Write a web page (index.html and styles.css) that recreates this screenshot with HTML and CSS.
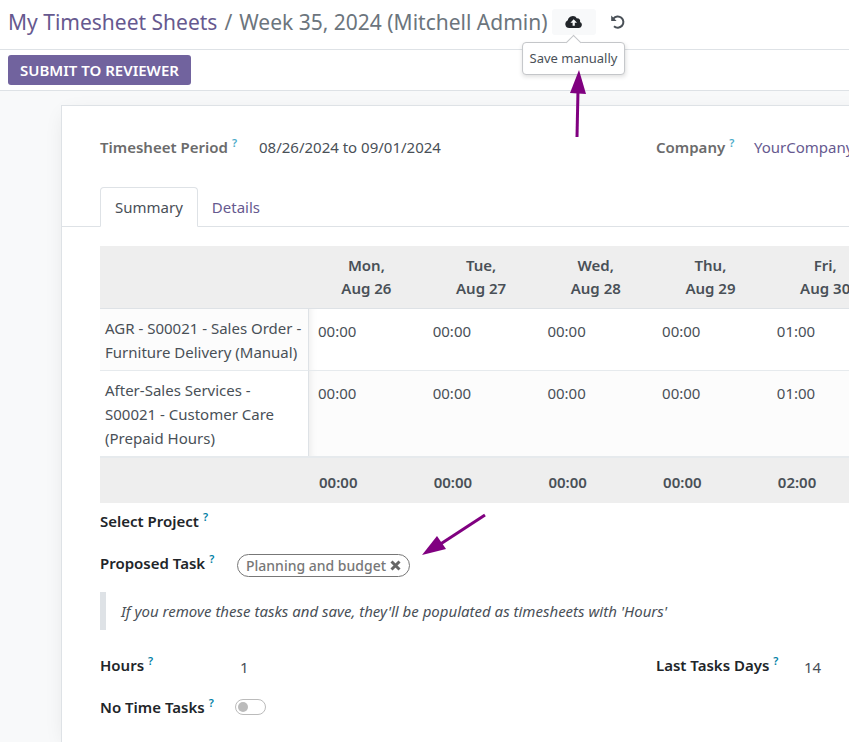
FILE: index.html
```html
<!DOCTYPE html>
<html lang="en">
<head>
<meta charset="utf-8">
<title>Week 35, 2024 (Mitchell Admin)</title>
<link rel="stylesheet" href="styles.css">
</head>
<body>
<header class="control-panel">
  <nav class="breadcrumb" aria-label="Breadcrumb">
    <a href="#">My Timesheet Sheets</a><span class="separator">/</span><span>Week 35, 2024 (Mitchell Admin)</span>
  </nav>
  <div class="save-wrap">
    <button class="icon-button active" type="button" aria-label="Save manually" aria-describedby="save-tip">
      <svg width="18" height="14" viewBox="0 0 18 14"><path fill="#212529" d="M4.2 13A4 4 0 0 1 2.8 5.3 5 5 0 0 1 12 3.4a2.7 2.7 0 0 1 3 3.5A3.2 3.2 0 0 1 14 13Z"/><path fill="#f8f9fa" d="M8.7 4.2 12 7.7H9.8v3.1H7.6V7.7H5.4Z"/></svg>
    </button>
    <div class="tooltip" id="save-tip" role="tooltip">Save manually</div>
    <svg class="arrow arrow-save" width="18" height="68" viewBox="0 0 18 68" aria-hidden="true"><path d="M8 67 9 20" stroke="#800080" stroke-width="3"/><path fill="#800080" d="M10 0 17 24 1 23Z"/></svg>
  </div>
  <button class="icon-button" type="button" aria-label="Discard changes">
    <svg width="16" height="16" viewBox="0 0 16 16" fill="none" stroke="#495057" stroke-width="2"><path d="M3.4 4.6A5.6 5.6 0 1 1 4 12.2"/><path fill="#495057" stroke="none" d="M1.2 1.6V7h5.4Z"/></svg>
  </button>
</header>
<div class="statusbar"><button class="primary" type="button">SUBMIT TO REVIEWER</button></div>
<main class="content">
  <div class="sheet">
    <section class="fields readonly">
      <div class="field"><span class="label">Timesheet Period<sup>?</sup></span><span>08/26/2024 to 09/01/2024</span></div>
      <div class="field company"><span class="label">Company<sup>?</sup></span><a href="#">YourCompany</a></div>
    </section>
    <nav class="tabs" aria-label="Sheet pages">
      <a class="tab selected" href="#">Summary</a>
      <a class="tab" href="#">Details</a>
    </nav>
    <div class="page">
      <table class="timesheet">
        <colgroup><col class="col-task"><col span="7"><col class="col-total"></colgroup>
        <thead>
          <tr><th></th><th>Mon,<br>Aug 26</th><th>Tue,<br>Aug 27</th><th>Wed,<br>Aug 28</th><th>Thu,<br>Aug 29</th><th>Fri,<br>Aug 30</th><th></th><th></th><th></th></tr>
        </thead>
        <tbody>
          <tr>
            <th scope="row">AGR - S00021 - Sales Order - Furniture Delivery (Manual)</th>
            <td><input aria-label="Sales Order, Aug 26" value="00:00"></td><td><input aria-label="Sales Order, Aug 27" value="00:00"></td><td><input aria-label="Sales Order, Aug 28" value="00:00"></td><td><input aria-label="Sales Order, Aug 29" value="00:00"></td><td><input aria-label="Sales Order, Aug 30" value="01:00"></td><td></td><td></td><td></td>
          </tr>
          <tr>
            <th scope="row">After-Sales Services - S00021 - Customer Care (Prepaid Hours)</th>
            <td><input aria-label="Customer Care, Aug 26" value="00:00"></td><td><input aria-label="Customer Care, Aug 27" value="00:00"></td><td><input aria-label="Customer Care, Aug 28" value="00:00"></td><td><input aria-label="Customer Care, Aug 29" value="00:00"></td><td><input aria-label="Customer Care, Aug 30" value="01:00"></td><td></td><td></td><td></td>
          </tr>
        </tbody>
        <tfoot>
          <tr><td></td><td>00:00</td><td>00:00</td><td>00:00</td><td>00:00</td><td>02:00</td><td></td><td></td><td></td></tr>
        </tfoot>
      </table>
      <section class="options">
        <div class="field"><label class="label" for="project">Select Project<sup>?</sup></label><input id="project" class="text-input"></div>
        <div class="field task">
          <span class="label">Proposed Task<sup>?</sup></span>
          <span class="tag">Planning and budget
            <button class="remove" type="button" aria-label="Remove Planning and budget"><svg width="11" height="11" viewBox="0 0 11 11" stroke="#666" stroke-width="3"><path d="m1.5 1.5 8 8m0-8-8 8"/></svg></button>
          </span>
          <svg class="arrow arrow-task" width="66" height="44" viewBox="0 0 66 44" aria-hidden="true"><path d="M64 2 18 32" stroke="#800080" stroke-width="3"/><path fill="#800080" d="M1 42 16 23 25 36Z"/></svg>
        </div>
        <blockquote>If you remove these tasks and save, they'll be populated as timesheets with 'Hours'</blockquote>
        <div class="fields">
          <div class="field"><label class="label" for="hours">Hours<sup>?</sup></label><input id="hours" class="text-input" value="1"></div>
          <div class="field days"><label class="label" for="days">Last Tasks Days<sup>?</sup></label><input id="days" class="text-input" value="14"></div>
        </div>
        <div class="field"><label class="label" for="notime">No Time Tasks<sup>?</sup></label><input id="notime" class="switch" type="checkbox"></div>
      </section>
    </div>
  </div>
</main>
</body>
</html>
```
FILE: styles.css
```css
* { box-sizing: border-box; }

body {
  margin: 0;
  min-height: 100vh;
  display: flex;
  flex-direction: column;
  overflow: hidden;
  background: #f8f9fa;
  color: #495057;
  font: 15px/23px "Noto Sans", sans-serif;
}

a { color: #66598f; text-decoration: none; }
button, input { font: inherit; color: inherit; }

.control-panel {
  display: flex;
  align-items: center;
  height: 50px;
  padding: 0 8px 6px;
  background: #fff;
  border-bottom: 1px solid #dee2e6;
}

.breadcrumb {
  color: #6c757d;
  font-size: 21px;
  line-height: 32px;
  white-space: nowrap;
}

.separator { margin: 0 7px; }

.save-wrap { position: relative; margin-left: 4px; }

.icon-button {
  display: flex;
  align-items: center;
  justify-content: center;
  width: 44px;
  height: 26px;
  padding: 0;
  border: 0;
  border-radius: 3px;
  background: none;
}

.icon-button.active { background: #f8f9fa; }

.tooltip {
  position: absolute;
  z-index: 1;
  top: 33px;
  left: 50%;
  transform: translateX(-50%);
  padding: 6px 7px;
  border: 1px solid #c4c6c9;
  border-radius: 4px;
  background: #fff;
  box-shadow: 0 2px 4px rgba(0, 0, 0, 0.12);
  font-size: 13px;
  line-height: 19px;
  white-space: nowrap;
}

.tooltip::before {
  content: "";
  position: absolute;
  top: -6px;
  left: 50%;
  width: 10px;
  height: 10px;
  margin-left: -5px;
  border: solid #c4c6c9;
  border-width: 1px 0 0 1px;
  background: #fff;
  transform: rotate(45deg);
}

.arrow { position: absolute; z-index: 2; fill: none; }
.arrow-save { top: 61px; left: 17px; }

.statusbar {
  padding: 5px 8px;
  background: #fff;
  border-bottom: 1px solid #dee2e6;
}

.primary {
  display: block;
  height: 30px;
  padding: 0 12px;
  border: 0;
  border-radius: 3px;
  background: #71639e;
  color: #fff;
  font-size: 15px;
  font-weight: 600;
}

.content { flex: 1; display: flex; padding: 14px 0 0 61px; }

.sheet {
  flex: 1 0 1190px;
  min-width: 0;
  padding-top: 29px;
  border: 1px solid #dee2e6;
  border-bottom: 0;
  background: #fff;
  box-shadow: 0 5px 20px -5px rgba(0, 0, 0, 0.1);
}

.fields { display: grid; grid-template-columns: repeat(2, minmax(0, 1fr)); }
.readonly { padding: 0 38px; }
.readonly .label { width: 159px; color: #6b6b6b; }
.readonly .company .label { width: 98px; }
.readonly sup { color: #4cabc9; }

.field { position: relative; display: flex; align-items: center; height: 24px; }

.label {
  width: 135px;
  color: #212529;
  font-weight: 600;
  white-space: nowrap;
}

sup {
  margin-left: 4px;
  color: #0180a5;
  font-size: 11px;
  line-height: 0;
}

.tabs {
  display: flex;
  margin-top: 28px;
  padding-left: 38px;
  border-bottom: 1px solid #dee2e6;
}

.tab {
  margin-bottom: -1px;
  padding: 8px 13px 7px;
  border: 1px solid transparent;
  border-radius: 4px 4px 0 0;
}

.tab.selected {
  padding: 8px 14px 7px;
  border-color: #dee2e6 #dee2e6 #fff;
  background: #fff;
  color: #495057;
}

.page { padding: 19px 38px 0; }

.timesheet {
  width: 100%;
  table-layout: fixed;
  border-collapse: separate;
  border-spacing: 0;
}

.col-task { width: 209px; }
.col-total { width: 100px; }

thead th {
  height: 63px;
  padding: 0;
  border-bottom: 1px solid #dee2e6;
  background: #eee;
  font-weight: 600;
}

tbody th {
  padding: 7px 5px 6px;
  border-right: 1px solid #dee2e6;
  font-weight: 400;
  line-height: 24px;
  text-align: left;
}

tbody tr:first-child > * { border-bottom: 1px solid #e6eaed; }
tbody tr:first-child th, tbody tr:last-child td { background: #fcfcfc; }

tbody td { padding: 10px 9px; vertical-align: top; }
tbody td:nth-child(2) { box-shadow: inset 8px 0 8px -8px rgba(0, 0, 0, 0.1); }

tbody input {
  display: block;
  width: 100%;
  height: 24px;
  padding: 0;
  border: 0;
  background: transparent;
}

tfoot td {
  height: 47px;
  padding: 3px 10px 0;
  border-top: 2px solid #e6eaed;
  background: #eee;
  font-weight: 600;
}

.options { padding-top: 6px; }
.task { margin-top: 18px; }

.text-input {
  width: 160px;
  height: 24px;
  padding: 4px 5px 0;
  border: 0;
  background: transparent;
}

.tag {
  display: flex;
  align-items: center;
  gap: 4px;
  height: 23px;
  margin: 4px 0 0 2px;
  padding: 0 8px;
  border: 1px solid #777;
  border-radius: 12px;
  color: #777;
  font-size: 14px;
  font-weight: 500;
}

.remove { display: flex; padding: 0; border: 0; background: none; }

.arrow-task { left: 321px; top: -38px; }

blockquote {
  margin: 17px 0 23px;
  padding: 7px 15px;
  border-left: 6px solid #dee2e6;
  font-style: italic;
  line-height: 24px;
}

.days .label { width: 143px; }

.options > .field:last-child { margin-top: 18px; }

.switch {
  appearance: none;
  width: 31px;
  height: 16px;
  margin: 0;
  padding: 2px;
  border: 1px solid #bbb;
  border-radius: 8px;
  background: #fff;
}

.switch::before {
  content: "";
  display: block;
  width: 10px;
  height: 10px;
  border-radius: 50%;
  background: #bbb;
}
```
